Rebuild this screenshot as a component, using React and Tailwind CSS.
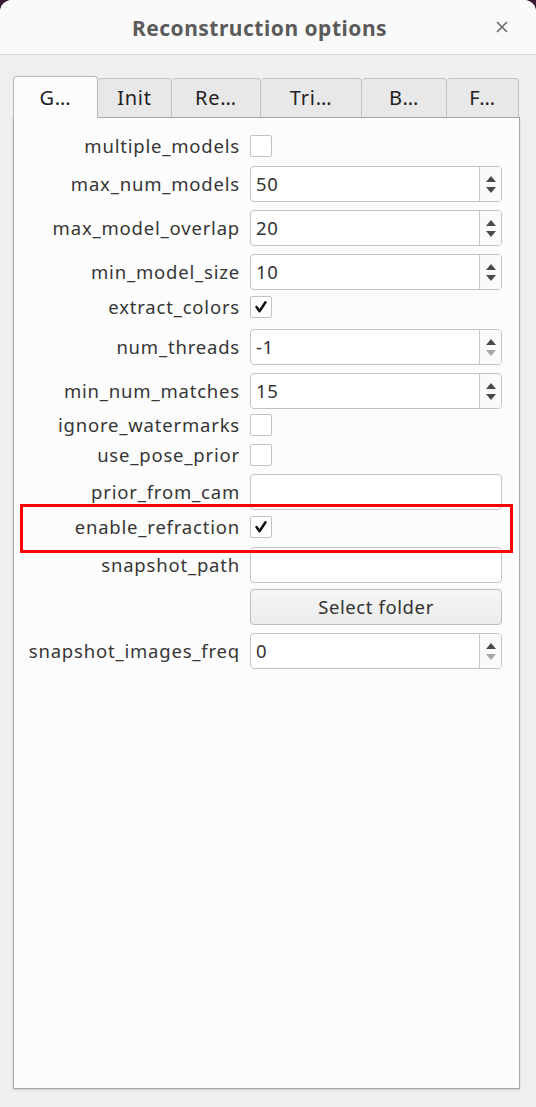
import React from "react";

const FONT = { fontFamily: '"Noto Sans", "Open Sans", sans-serif' };

function Arrows({ downDisabled }) {
  return (
    <div className="flex w-[22px] flex-col items-center justify-center gap-[5px] border-l border-[#c8c8c8] bg-[#fafafa]">
      <svg width="10" height="6" viewBox="0 0 10 6"><path d="M5 0 L10 6 L0 6 Z" fill="#4a4a4a" /></svg>
      <svg width="10" height="6" viewBox="0 0 10 6"><path d="M0 0 L10 0 L5 6 Z" fill={downDisabled ? "#a8a8a8" : "#4a4a4a"} /></svg>
    </div>
  );
}

function Spin({ value, downDisabled }) {
  return (
    <div className="flex h-[36px] w-[252px] overflow-hidden rounded-[4px] border border-[#c3c3c3] bg-white">
      <div className="flex flex-1 items-center pl-[5px] text-[18.5px] tracking-[0.6px] text-[#333]">{value}</div>
      <Arrows downDisabled={downDisabled} />
    </div>
  );
}

function Line() {
  return <div className="h-[36px] w-[252px] rounded-[4px] border border-[#c3c3c3] bg-white" />;
}

function Check({ checked }) {
  return (
    <div className="flex h-[22px] w-[22px] items-center justify-center rounded-[2px] border border-[#c3c3c3] bg-white">
      {checked && (
        <svg width="14" height="14" viewBox="0 0 14 14">
          <path d="M2.5 7 L5.5 11.2 L11.5 2.3" fill="none" stroke="#111" strokeWidth="2.5" strokeLinecap="round" strokeLinejoin="round" />
        </svg>
      )}
    </div>
  );
}

function Row({ label, mt, children }) {
  return (
    <div className="flex items-center" style={{ marginTop: mt }}>
      <div className="w-[224px] whitespace-nowrap pr-[10px] text-right text-[18.5px] leading-none tracking-[0.8px] text-[#363636]">{label}</div>
      {children}
    </div>
  );
}

const tabs = [
  { t: "G…", w: 85, sel: true },
  { t: "Init", w: 74 },
  { t: "Re…", w: 89 },
  { t: "Tri…", w: 101 },
  { t: "B…", w: 85 },
  { t: "F…", w: 72 },
];

export default function App() {
  return (
    <div className="h-[1107px] w-[536px] bg-[#3a1a30]" style={FONT}>
      <div className="relative flex h-full w-full flex-col overflow-hidden rounded-t-[12px] bg-[#efefef]">
        <div className="relative flex h-[55px] shrink-0 items-center justify-center border-b border-[#d9d9d9] bg-[#fafafa] pr-[17px] pt-[3px]">
          <div className="text-[21px] font-bold tracking-[0.5px] text-[#5b5b5b]">Reconstruction options</div>
          <svg className="absolute right-[28px] top-[21px]" width="12" height="12" viewBox="0 0 12 12">
            <path d="M1 1 L11 11 M11 1 L1 11" stroke="#6a6a6a" strokeWidth="1.6" />
          </svg>
        </div>
        <div className="ml-[13px] mt-[20px] flex h-[42px] items-end">
          {tabs.map((tb, i) =>
            tb.sel ? (
              <div key={i} className="relative z-10 -mb-px flex h-[42px] items-center justify-center rounded-t-[4px] border border-b-0 border-[#b8b8b8] bg-[#fcfcfc] text-[20px] tracking-[0.8px] text-[#222]" style={{ width: tb.w }}>
                {tb.t}
              </div>
            ) : (
              <div key={i} className="flex h-[39px] items-center justify-center rounded-t-[4px] border border-b-0 border-l-0 border-[#c2c2c2] bg-[#e8e8e8] text-[20px] tracking-[0.8px] text-[#222]" style={{ width: tb.w }}>
                {tb.t}
              </div>
            )
          )}
        </div>
        <div className="ml-[13px] h-[972px] w-[507px] border border-[#a9a9a9] bg-[#fcfcfc] shadow-[0_1px_2px_rgba(0,0,0,0.15)]">
          <div className="flex flex-col pl-[12px]">
            <Row label="multiple_models" mt={17}><Check /></Row>
            <Row label="max_num_models" mt={9}><Spin value="50" /></Row>
            <Row label="max_model_overlap" mt={8}><Spin value="20" /></Row>
            <Row label="min_model_size" mt={8}><Spin value="10" /></Row>
            <Row label="extract_colors" mt={6}><Check checked /></Row>
            <Row label="num_threads" mt={11}><Spin value="-1" downDisabled /></Row>
            <Row label="min_num_matches" mt={8}><Spin value="15" /></Row>
            <Row label="ignore_watermarks" mt={5}><Check /></Row>
            <Row label="use_pose_prior" mt={8}><Check /></Row>
            <Row label="prior_from_cam" mt={8}><Line /></Row>
            <Row label="enable_refraction" mt={6}><Check checked /></Row>
            <Row label="snapshot_path" mt={9}><Line /></Row>
            <Row label="" mt={6}>
              <div className="flex h-[36px] w-[252px] items-center justify-center rounded-[4px] border border-[#bcbcbc] bg-gradient-to-b from-[#f7f7f7] to-[#ebebeb] text-[18.5px] tracking-[0.6px] text-[#333]">
                Select folder
              </div>
            </Row>
            <Row label="snapshot_images_freq" mt={8}><Spin value="0" downDisabled /></Row>
          </div>
        </div>
        <div className="pointer-events-none absolute left-[20px] top-[504px] h-[49px] w-[493px] border-[3px] border-[#ff0000]" />
      </div>
    </div>
  );
}
